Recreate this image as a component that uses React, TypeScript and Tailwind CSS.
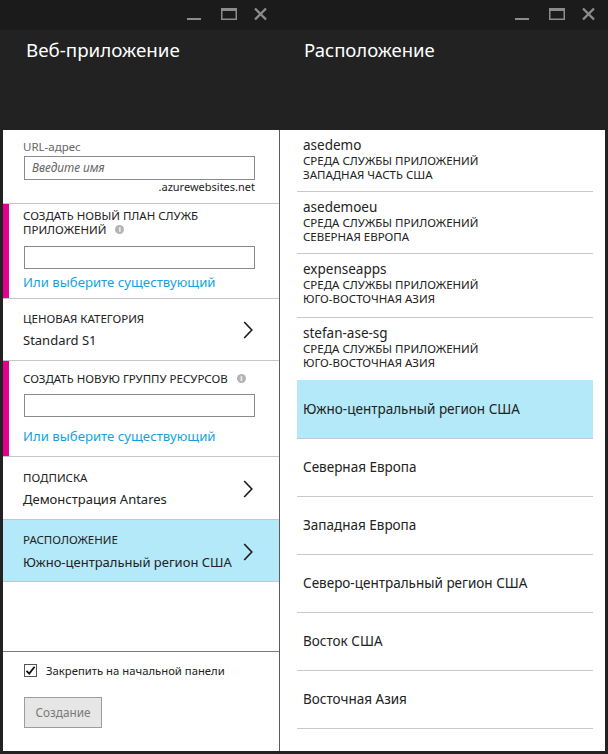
import React from 'react';

const sans = "font-['Noto_Sans','Open_Sans',sans-serif]";

function WindowControls() {
  return (
    <div className="flex h-[30px] items-start justify-end pr-[13px] bg-[#1b1b1b]">
      <svg width="80" height="30" viewBox="0 0 80 30" className="block">
        {/* minimize */}
        <rect x="0" y="18" width="14" height="2" fill="#8c8c8c" />
        {/* maximize */}
        <rect x="34.75" y="8.75" width="14.5" height="10.5" fill="none" stroke="#8c8c8c" strokeWidth="1.5" />
        <rect x="34" y="8" width="16" height="3" fill="#8c8c8c" />
        {/* close */}
        <path d="M68 8.5 L79 19.5 M79 8.5 L68 19.5" stroke="#8c8c8c" strokeWidth="2.4" />
      </svg>
    </div>
  );
}

function Chevron() {
  return (
    <svg width="10" height="18" viewBox="0 0 10 18" className="shrink-0">
      <path d="M1.2 1 L8.8 9 L1.2 17" fill="none" stroke="#1a1a1a" strokeWidth="1.6" />
    </svg>
  );
}

function Info() {
  return (
    <span className="ml-[9px] inline-flex h-[9px] w-[9px] translate-y-[-1px] items-center justify-center rounded-full bg-[#b4b4b4] align-middle text-[7px] font-bold leading-none text-white">
      i
    </span>
  );
}

function NavRow({ label, value, active, pt, gap, pb }: { label: string; value: string; active?: boolean; pt: string; gap: string; pb: string }) {
  return (
    <div className={`flex items-center border-b border-[#c6c6c6] pl-[20px] pr-[26px] ${pt} ${pb} ${active ? 'bg-[#b3e9f8]' : ''}`}>
      <div className="flex-1">
        <div className="text-[11.5px] leading-[16px] text-[#222]">{label}</div>
        <div className={`text-[13px] leading-[18px] text-[#222] ${gap}`}>{value}</div>
      </div>
      <Chevron />
    </div>
  );
}

const environments = [
  { name: 'asedemo', region: 'ЗАПАДНАЯ ЧАСТЬ США', h: 'h-[62px]' },
  { name: 'asedemoeu', region: 'СЕВЕРНАЯ ЕВРОПА', h: 'h-[62px]' },
  { name: 'expenseapps', region: 'ЮГО-ВОСТОЧНАЯ АЗИЯ', h: 'h-[64px]' },
  { name: 'stefan-ase-sg', region: 'ЮГО-ВОСТОЧНАЯ АЗИЯ', h: 'h-[63px]' },
];

const regions = [
  'Южно-центральный регион США',
  'Северная Европа',
  'Западная Европа',
  'Северо-центральный регион США',
  'Восток США',
  'Восточная Азия',
];

export default function App() {
  return (
    <div className={`flex h-[754px] w-[608px] bg-[#222] ${sans}`}>
      {/* Web app blade */}
      <div className="flex w-[280px] flex-col">
        <WindowControls />
        <div className="h-[100px] pl-[26px] pt-[7px] text-[18.8px] leading-[26px] text-white">Веб-приложение</div>
        <div className="mb-[3px] ml-[3px] flex flex-1 flex-col border-r border-[#5c5c5c] bg-white">
          {/* URL */}
          <div className="border-b border-[#c6c6c6] pb-[9px] pl-[20px] pr-[24px] pt-[9px]">
            <div className="text-[11.5px] leading-[15px] text-[#666]">URL-адрес</div>
            <div className="ml-[1px] mt-[2px] flex h-[24px] items-center border border-[#8a8a8a] pl-[7px] text-[11.8px] italic text-[#666]">
              Введите имя
            </div>
            <div className="text-right text-[11px] leading-[14px] text-[#222]">.azurewebsites.net</div>
          </div>

          {/* New plan */}
          <div className="flex border-b border-[#c6c6c6]">
            <div className="w-[6px] bg-[#e3008c]" />
            <div className="flex-1 pb-[7px] pl-[14px] pr-[24px] pt-[5px]">
              <div className="text-[11.5px] leading-[14px] text-[#222]">
                СОЗДАТЬ НОВЫЙ ПЛАН СЛУЖБ
                <br />
                ПРИЛОЖЕНИЙ
                <Info />
              </div>
              <div className="ml-[1px] mt-[9px] h-[23px] border border-[#8a8a8a]" />
              <div className="mt-[5px] text-[13.2px] leading-[17px] text-[#199fe0]">Или выберите существующий</div>
            </div>
          </div>

          <NavRow label="ЦЕНОВАЯ КАТЕГОРИЯ" value="Standard S1" pt="pt-[12px]" gap="mt-[4px]" pb="pb-[11px]" />

          {/* New resource group */}
          <div className="flex border-b border-[#c6c6c6]">
            <div className="w-[6px] bg-[#e3008c]" />
            <div className="flex-1 pb-[11px] pl-[14px] pr-[24px] pt-[10px]">
              <div className="text-[11.5px] leading-[15px] text-[#222]">
                СОЗДАТЬ НОВУЮ ГРУППУ РЕСУРСОВ
                <Info />
              </div>
              <div className="ml-[1px] mt-[8px] h-[23px] border border-[#8a8a8a]" />
              <div className="mt-[11px] text-[13.2px] leading-[17px] text-[#199fe0]">Или выберите существующий</div>
            </div>
          </div>

          <NavRow label="ПОДПИСКА" value="Демонстрация Antares" pt="pt-[13px]" gap="mt-[4px]" pb="pb-[11px]" />
          <NavRow label="РАСПОЛОЖЕНИЕ" value="Южно-центральный регион США" active pt="pt-[12px]" gap="mt-[5px]" pb="pb-[10px]" />

          <div className="flex-1" />

          {/* Footer */}
          <div className="border-t border-[#7a7a7a] pb-[23px] pl-[21px] pt-[12px]">
            <label className="flex h-[13px] items-center">
              <span className="flex h-[13px] w-[13px] items-center justify-center border border-[#555] bg-white">
                <svg width="11" height="11" viewBox="0 0 11 11">
                  <path d="M1.5 5.8 L4.2 8.6 L9.6 1.8" fill="none" stroke="#111" strokeWidth="1.8" />
                </svg>
              </span>
              <span className="ml-[9px] text-[11.3px] leading-[15px] text-[#222]">Закрепить на начальной панели</span>
            </label>
            <button className="mt-[20px] h-[31px] w-[78px] border border-[#9c9c9c] bg-[#e6e6e6] text-[11.8px] text-[#7a7a7a]">
              Создание
            </button>
          </div>
        </div>
      </div>

      {/* Location blade */}
      <div className="flex flex-1 flex-col">
        <WindowControls />
        <div className="h-[100px] pl-[24px] pt-[7px] text-[18.5px] leading-[26px] text-white">Расположение</div>
        <div className="mb-[3px] mr-[3px] flex-1 bg-white pl-[17px] pr-[12px]">
          {environments.map((e, i) => (
            <div
              key={e.name}
              className={`${e.h} border-b pl-[6px] pt-[7px] ${i === environments.length - 1 ? 'border-[#b3e9f8]' : 'border-[#c8c8c8]'}`}
            >
              <div className="text-[13.5px] leading-[16px] text-[#222]">{e.name}</div>
              <div className="mt-[1px] text-[11.5px] leading-[14px] text-[#222]">СРЕДА СЛУЖБЫ ПРИЛОЖЕНИЙ</div>
              <div className="text-[11.5px] leading-[14px] text-[#222]">{e.region}</div>
            </div>
          ))}
          {regions.map((r, i) => (
            <div
              key={r}
              className={`flex h-[58px] items-center border-b border-[#c8c8c8] pl-[6px] text-[13.5px] text-[#222] ${i === 0 ? 'bg-[#b3e9f8]' : ''}`}
            >
              {r}
            </div>
          ))}
        </div>
      </div>
    </div>
  );
}
